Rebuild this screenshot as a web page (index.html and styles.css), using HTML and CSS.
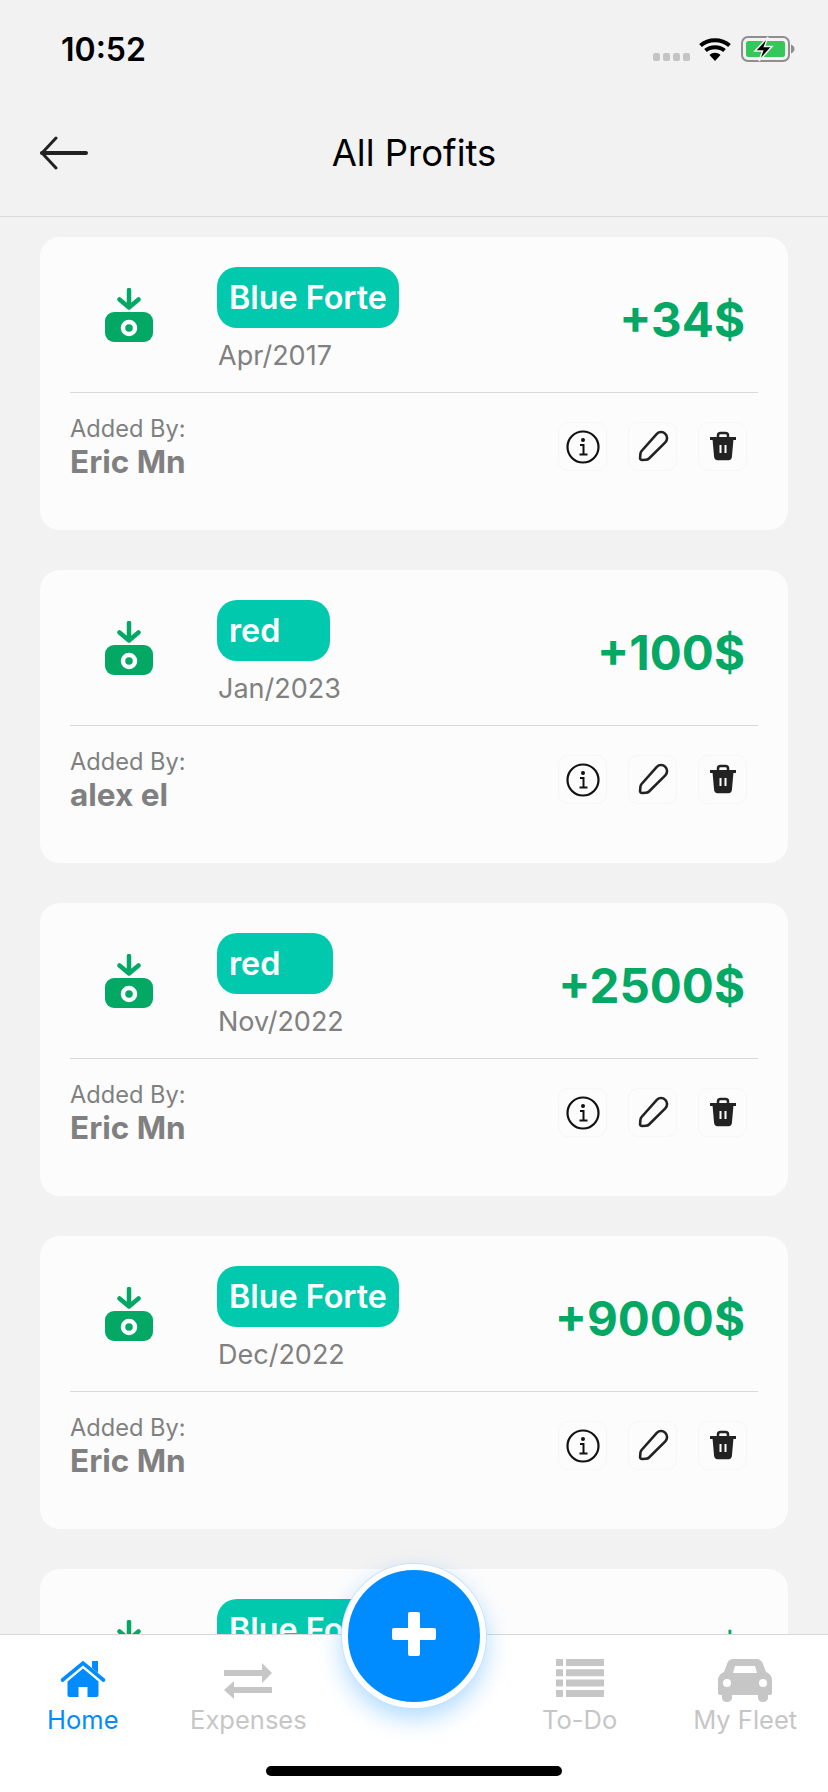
FILE: index.html
```html
<!DOCTYPE html>
<html lang="en">
<head>
    <meta charset="UTF-8">
    <meta name="viewport" content="width=device-width, initial-scale=1.0">
    <title>All Profits</title>
    <link rel="stylesheet" href="styles.css">
</head>
<body>
    <svg class="sprites" width="0" height="0">
        <symbol id="money" viewBox="0 0 48 54">
            <path d="M24 2v17M14.500 11.500L24 19.500l9.500-8" fill="none" stroke="#03a865" stroke-width="4.500" stroke-linecap="round" stroke-linejoin="round"/>
            <rect x="0" y="24" width="48" height="30" rx="9" fill="#03a865"/>
            <circle cx="24" cy="40" r="6" fill="none" stroke="#fff" stroke-width="4.500"/>
        </symbol>
        <symbol id="info" viewBox="0 0 48 48">
            <circle cx="25" cy="24" r="15.500" fill="none" stroke="#111" stroke-width="2.200"/>
            <circle cx="25" cy="17" r="2" fill="#111"/>
            <path d="M22 22h3.500v9M21.500 31.500h8" fill="none" stroke="#111" stroke-width="2"/>
        </symbol>
        <symbol id="pencil" viewBox="0 0 48 48">
            <path d="M28.800 10.800a6 6 0 0 1 8.500 8.500L21 35.500c-1 1-2 1.200-3 1.200l-4 .3c-1.200 0-2-.8-1.900-2l.3-4c.1-1.200.4-2 1.200-3z" fill="none" stroke="#222" stroke-width="2.600"/>
        </symbol>
        <symbol id="trash" viewBox="0 0 48 48">
            <path d="M20 15v-2.500c0-1.500 1-2.500 2.500-2.500h5c1.500 0 2.500 1 2.500 2.500V15" fill="none" stroke="#222" stroke-width="2.500"/>
            <path d="M12 14h26v3H12z" fill="#222"/>
            <path d="M14.500 16h21l-1.600 18c-.2 2-1.400 3.200-3.400 3.200H19.500c-2 0-3.200-1.200-3.400-3.200z" fill="#222"/>
            <path d="M21.500 22h2v8h-2zM26.500 22h2v8h-2z" fill="#fff"/>
        </symbol>
    </svg>

    <div class="app">
        <div class="status-bar">
            <span class="time">10:52</span>
            <div class="status-icons">
                <div class="signal"><i></i><i></i><i></i><i></i></div>
                <svg class="wifi" width="32" height="24" viewBox="0 0 32 24">
                    <path d="M1.500 8.500C9.500 1.500 22.500 1.500 30.500 8.500M6.500 13.500C11.500 9 20.500 9 25.500 13.500" fill="none" stroke="#000" stroke-width="4"/>
                    <path d="M16 24L10.500 18c3-3 8-3 11 0z" fill="#000"/>
                </svg>
                <svg class="battery" width="54" height="26" viewBox="0 0 54 26">
                    <rect x="1" y="1" width="47" height="24" rx="6" fill="none" stroke="#8e8e8e" stroke-width="2"/>
                    <rect x="5" y="5" width="39" height="16" rx="2.500" fill="#34c759"/>
                    <path d="M50 8.500c2 .5 3.500 2.500 3.500 4.500s-1.500 4-3.500 4.500z" fill="#8e8e8e"/>
                    <path d="M27 1L14 15h7.500L18 25l13-14.500h-7.500z" fill="#000" stroke="#f2f2f2" stroke-width="1.500"/>
                </svg>
            </div>
        </div>

        <header class="top-bar">
            <svg class="back" width="48" height="34" viewBox="0 0 48 34">
                <path d="M2 17h44" stroke="#222" stroke-width="4" stroke-linecap="round"/>
                <path d="M16 2L2 17l14 15" fill="none" stroke="#222" stroke-width="3" stroke-linecap="round"/>
            </svg>
            <h1>All Profits</h1>
        </header>

        <main class="list">
            <article class="card">
                <div class="card-top">
                    <svg class="money-icon" width="48" height="54"><use href="#money"/></svg>
                    <div class="card-info">
                        <span class="tag">Blue Forte</span>
                        <span class="date">Apr/2017</span>
                    </div>
                    <div class="amount">+34$</div>
                </div>
                <div class="card-bottom">
                    <div class="added">
                        <span class="added-label">Added By:</span>
                        <span class="added-name">Eric Mn</span>
                    </div>
                    <div class="actions">
                        <button class="action"><svg width="48" height="48"><use href="#info"/></svg></button>
                        <button class="action"><svg width="48" height="48"><use href="#pencil"/></svg></button>
                        <button class="action"><svg width="48" height="48"><use href="#trash"/></svg></button>
                    </div>
                </div>
            </article>

            <article class="card">
                <div class="card-top">
                    <svg class="money-icon" width="48" height="54"><use href="#money"/></svg>
                    <div class="card-info">
                        <span class="tag tag-jan">red</span>
                        <span class="date">Jan/2023</span>
                    </div>
                    <div class="amount">+100$</div>
                </div>
                <div class="card-bottom">
                    <div class="added">
                        <span class="added-label">Added By:</span>
                        <span class="added-name">alex el</span>
                    </div>
                    <div class="actions">
                        <button class="action"><svg width="48" height="48"><use href="#info"/></svg></button>
                        <button class="action"><svg width="48" height="48"><use href="#pencil"/></svg></button>
                        <button class="action"><svg width="48" height="48"><use href="#trash"/></svg></button>
                    </div>
                </div>
            </article>

            <article class="card">
                <div class="card-top">
                    <svg class="money-icon" width="48" height="54"><use href="#money"/></svg>
                    <div class="card-info">
                        <span class="tag tag-nov">red</span>
                        <span class="date">Nov/2022</span>
                    </div>
                    <div class="amount">+2500$</div>
                </div>
                <div class="card-bottom">
                    <div class="added">
                        <span class="added-label">Added By:</span>
                        <span class="added-name">Eric Mn</span>
                    </div>
                    <div class="actions">
                        <button class="action"><svg width="48" height="48"><use href="#info"/></svg></button>
                        <button class="action"><svg width="48" height="48"><use href="#pencil"/></svg></button>
                        <button class="action"><svg width="48" height="48"><use href="#trash"/></svg></button>
                    </div>
                </div>
            </article>

            <article class="card">
                <div class="card-top">
                    <svg class="money-icon" width="48" height="54"><use href="#money"/></svg>
                    <div class="card-info">
                        <span class="tag">Blue Forte</span>
                        <span class="date">Dec/2022</span>
                    </div>
                    <div class="amount">+9000$</div>
                </div>
                <div class="card-bottom">
                    <div class="added">
                        <span class="added-label">Added By:</span>
                        <span class="added-name">Eric Mn</span>
                    </div>
                    <div class="actions">
                        <button class="action"><svg width="48" height="48"><use href="#info"/></svg></button>
                        <button class="action"><svg width="48" height="48"><use href="#pencil"/></svg></button>
                        <button class="action"><svg width="48" height="48"><use href="#trash"/></svg></button>
                    </div>
                </div>
            </article>

            <!-- cut off by the tab bar -->
            <article class="card card-cut">
                <div class="card-top">
                    <svg class="money-icon" width="48" height="54"><use href="#money"/></svg>
                    <div class="card-info">
                        <span class="tag">Blue Forte</span>
                    </div>
                    <div class="amount">+500$</div>
                </div>
            </article>
        </main>

        <nav class="tab-bar">
            <div class="tabs">
                <a class="tab active">
                    <svg width="56" height="44" viewBox="0 0 56 44">
                        <path d="M7.500 21L28 4l20.500 17" fill="none" stroke="#008cff" stroke-width="3.600" stroke-linecap="round"/>
                        <path d="M37 2h6v12l-6-5z" fill="#008cff"/>
                        <path d="M28 9.500L43.500 22.500V36q0 2-2 2H32.500V28h-9v10H14.500q-2 0-2-2V22.500z" fill="#008cff"/>
                    </svg>
                    <span>Home</span>
                </a>
                <a class="tab">
                    <svg width="56" height="44" viewBox="0 0 56 44">
                        <path d="M4 11h38V4l10 10-10 10v-7H4z" fill="#c6c6c6"/>
                        <path d="M52 28H14v-6L4 31l10 9v-6h38z" fill="#c6c6c6"/>
                    </svg>
                    <span>Expenses</span>
                </a>
                <div class="fab-slot">
                    <button class="fab">
                        <svg width="44" height="44" viewBox="0 0 44 44">
                            <path d="M16 2q0-2 2-2h8q2 0 2 2v14h14q2 0 2 2v8q0 2-2 2H28v14q0 2-2 2h-8q-2 0-2-2V28H2q-2 0-2-2v-8q0-2 2-2h14z" fill="#fff"/>
                        </svg>
                    </button>
                </div>
                <a class="tab">
                    <svg width="56" height="44" viewBox="0 0 56 44">
                        <path d="M4 0h7v7H4zM14 0h38v7H14zM4 10.300h7v7H4zM14 10.300h38v7H14zM4 20.600h7v7H4zM14 20.600h38v7H14zM4 31h7v7H4zM14 31h38v7H14z" fill="#c6c6c6"/>
                    </svg>
                    <span>To-Do</span>
                </a>
                <a class="tab">
                    <svg width="56" height="44" viewBox="0 0 56 44">
                        <path fill-rule="evenodd" d="M17 0h22c4 0 6 2 7 5l3 8c3 1 6 4 6 8v13c0 1-1 2-2 2h-2v3c0 2-2 4-5 4s-5-2-5-4v-3H15v3c0 2-2 4-5 4s-5-2-5-4v-3H3c-1 0-2-1-2-2V21c0-4 3-7 6-8l3-8c1-3 3-5 7-5zM18 7l-2 7h24l-2-7zM10 20a4 4 0 1 0 0 8 4 4 0 0 0 0-8zM46 20a4 4 0 1 0 0 8 4 4 0 0 0 0-8z" fill="#c6c6c6"/>
                    </svg>
                    <span>My Fleet</span>
                </a>
            </div>
            <div class="home-indicator"></div>
        </nav>
    </div>
</body>
</html>
```

FILE: styles.css
```css
* {
    box-sizing: border-box;
}

body {
    margin: 0;
    font-family: Inter, "Liberation Sans", sans-serif;
    background: #f2f2f2;
    color: #000;
}

.sprites {
    position: absolute;
}

.app {
    display: flex;
    flex-direction: column;
    height: 1792px;
    overflow: hidden;
}

/* status bar */
.status-bar {
    display: flex;
    justify-content: space-between;
    align-items: center;
    height: 98px;
    padding: 0 33px 0 61px;
}

.time {
    font-size: 32px;
    font-weight: 600;
}

.status-icons {
    display: flex;
    align-items: center;
    gap: 9px;
}

.signal {
    display: flex;
    gap: 3px;
    align-self: flex-end;
    margin-bottom: 1px;
}

.signal i {
    width: 7px;
    height: 8px;
    border-radius: 2px;
    background: #c4c4c4;
}

.wifi {
    margin-right: 1px;
}

/* top bar */
.top-bar {
    display: flex;
    justify-content: center;
    align-items: center;
    position: relative;
    height: 119px;
    padding-bottom: 8px;
    border-bottom: 1px solid #d8d8d8;
}

.top-bar h1 {
    margin: 0;
    font-size: 36.500px;
    font-weight: 400;
}

.back {
    position: absolute;
    left: 40px;
    top: 38px;
}

/* profit list */
.list {
    flex: 1;
    min-height: 0;
    overflow: hidden;
    padding: 20px 40px 0;
}

.card {
    height: 293px;
    margin-bottom: 40px;
    padding: 30px 30px 0;
    background: #fcfcfc;
    border-radius: 20px;
}

.card-top {
    display: flex;
    align-items: center;
    height: 126px;
    padding: 0 13px 20px 35px;
    border-bottom: 1px solid #d8d8d8;
}

.money-icon {
    flex: none;
    margin: 0 64px 10px 0;
}

.card-info {
    display: flex;
    flex-direction: column;
    align-items: flex-start;
}

.card-cut .card-info {
    align-self: flex-start;
}

.tag {
    height: 61px;
    padding: 0 12px;
    border-radius: 20px;
    background: #00c9ae;
    color: #fff;
    font-size: 32.300px;
    font-weight: 600;
    line-height: 61px;
}

.tag-jan {
    width: 113px;
}

.tag-nov {
    width: 116px;
}

.date {
    margin: 11px 0 0 1px;
    color: #808080;
    font-size: 27px;
    line-height: 34px;
}

.amount {
    margin-left: auto;
    color: #03a865;
    font-size: 47.500px;
    font-weight: 700;
}

.card-bottom {
    display: flex;
    justify-content: space-between;
    align-items: flex-start;
    padding: 29px 11px 0 0;
}

.added {
    display: flex;
    flex-direction: column;
    color: #808080;
}

.added-label {
    font-size: 23.600px;
    line-height: 28px;
    margin-top: -7px;
}

.added-name {
    font-size: 31.500px;
    font-weight: 700;
    line-height: 38px;
}

.actions {
    display: flex;
    gap: 21px;
}

.action {
    width: 49px;
    height: 49px;
    padding: 0;
    background: transparent;
    border: 1px solid #f6f6fb;
    border-radius: 10px;
}

.action svg {
    display: block;
    margin: -1px;
}

/* bottom tabs */
.tab-bar {
    position: relative;
    flex: none;
    background: #fff;
    border-top: 1px solid #d8d8d8;
}

.tabs {
    display: grid;
    grid-template-columns: repeat(5, 1fr);
    padding-top: 24px;
}

.tab {
    display: flex;
    flex-direction: column;
    align-items: center;
    color: #c6c6c6;
    font-size: 25.500px;
    line-height: 30px;
}

.tab svg {
    margin-bottom: 2px;
}

.tab.active {
    color: #008cff;
}

.fab-slot {
    position: relative;
}

.fab {
    position: absolute;
    top: -95px;
    left: 50%;
    display: flex;
    justify-content: center;
    align-items: center;
    width: 144px;
    height: 144px;
    margin-left: -72px;
    padding: 0 0 4px;
    background: #008cff;
    border: 6px solid #fff;
    border-radius: 50%;
    box-shadow: 0 0 0 1px #c4e2ff, 0 10px 24px rgba(0, 140, 255, 0.32);
}

.home-indicator {
    width: 296px;
    height: 10px;
    margin: 31px auto 16px;
    border-radius: 5px;
    background: #000;
}
```
